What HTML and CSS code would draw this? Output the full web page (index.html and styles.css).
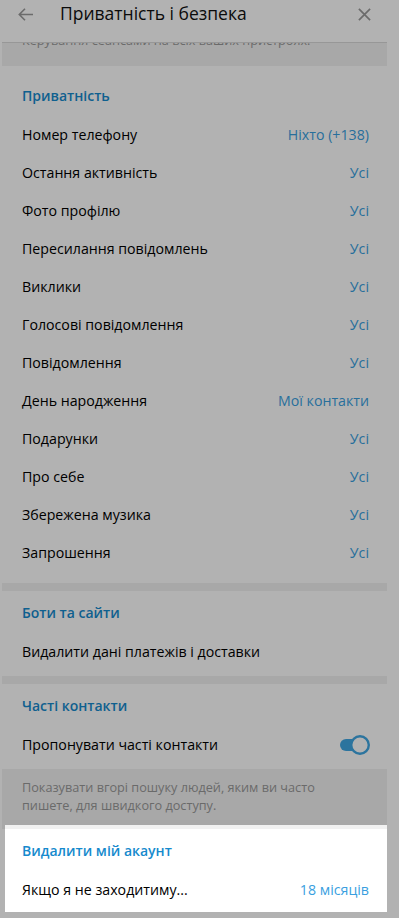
FILE: index.html
```html
<!DOCTYPE html>
<html lang="uk">
<head>
<meta charset="utf-8">
<title>Приватність і безпека</title>
<link rel="stylesheet" href="styles.css">
</head>
<body>
<div class="window">
  <header class="header">
    <span class="icon back">
      <svg width="15" height="13" viewBox="0 0 15 13"><path d="M15 6.5H1.3M7 0.8L1.3 6.5L7 12.2" fill="none" stroke="#9a9a9a" stroke-width="1.6"/></svg>
    </span>
    <h1 class="title">Приватність і безпека</h1>
    <span class="icon close">
      <svg width="13" height="13" viewBox="0 0 13 13"><path d="M0.9 0.9L12.1 12.1M12.1 0.9L0.9 12.1" fill="none" stroke="#9a9a9a" stroke-width="1.7"/></svg>
    </span>
  </header>
  <main class="content">
    <div class="divider divider-top">
      <p class="divider-text cut">Керування сеансами на всіх ваших пристроях.</p>
    </div>
    <section class="section section-first">
      <h2 class="subtitle">Приватність</h2>
      <div class="row"><span>Номер телефону</span><span class="value">Ніхто (+138)</span></div>
      <div class="row"><span>Остання активність</span><span class="value">Усі</span></div>
      <div class="row"><span>Фото профілю</span><span class="value">Усі</span></div>
      <div class="row"><span>Пересилання повідомлень</span><span class="value">Усі</span></div>
      <div class="row"><span>Виклики</span><span class="value">Усі</span></div>
      <div class="row"><span>Голосові повідомлення</span><span class="value">Усі</span></div>
      <div class="row"><span>Повідомлення</span><span class="value">Усі</span></div>
      <div class="row"><span>День народження</span><span class="value">Мої контакти</span></div>
      <div class="row"><span>Подарунки</span><span class="value">Усі</span></div>
      <div class="row"><span>Про себе</span><span class="value">Усі</span></div>
      <div class="row"><span>Збережена музика</span><span class="value">Усі</span></div>
      <div class="row"><span>Запрошення</span><span class="value">Усі</span></div>
    </section>
    <div class="divider"></div>
    <section class="section">
      <h2 class="subtitle">Боти та сайти</h2>
      <div class="row"><span>Видалити дані платежів і доставки</span></div>
    </section>
    <div class="divider"></div>
    <section class="section">
      <h2 class="subtitle">Часті контакти</h2>
      <div class="row"><span>Пропонувати часті контакти</span>
        <svg class="toggle" width="32" height="22" viewBox="0 0 32 22"><rect x="1" y="5" width="24" height="12" rx="6" fill="#40a7e3"/><circle cx="21" cy="11" r="8.8" fill="#fff" stroke="#40a7e3" stroke-width="2.4"/></svg>
      </div>
    </section>
    <div class="divider divider-label">
      <p class="divider-text">Показувати вгорі пошуку людей, яким ви часто пишете, для швидкого доступу.</p>
    </div>
    <section class="section spotlight">
      <h2 class="subtitle">Видалити мій акаунт</h2>
      <div class="row"><span>Якщо я не заходитиму...</span><span class="value">18 місяців</span></div>
    </section>
  </main>
</div>
</body>
</html>
```
FILE: styles.css
```css
html, body {
  margin: 0;
  padding: 0;
  background: #ffffff;
}

.window {
  width: 399px;
  min-height: 918px;
  font-family: "Open Sans", "Noto Sans", sans-serif;
  color: #000000;
  background: #ffffff;
}

.header {
  height: 42px;
  display: flex;
  align-items: flex-start;
  background: #ffffff;
}

.icon {
  height: 29px;
  display: flex;
  align-items: center;
}

.back {
  margin-left: 18px;
  width: 15px;
}

.title {
  margin: 0 0 0 27px;
  font-size: 17.5px;
  font-weight: 500;
  line-height: 26px;
  color: #111111;
}

.close {
  margin-left: auto;
  margin-right: 28px;
  width: 13px;
}

.content {
  margin-left: 2px;
  width: 385px;
}

.divider {
  height: 8px;
  background: #f1f1f1;
}

.divider-top {
  height: 23px;
  border-top: 1px solid #d8d8d8;
  overflow: hidden;
}

.divider-text {
  margin: 0;
  padding: 0 45px 0 20px;
  font-size: 12.7px;
  line-height: 18px;
  color: #999999;
}

.divider-text.cut {
  margin-top: -12px;
  white-space: nowrap;
}

.divider-label {
  height: auto;
  padding: 9px 0 15px;
}

.section {
  padding: 12px 0 5px;
}

.section-first {
  padding: 20px 0 11px;
}

.subtitle {
  margin: 0 0 10px;
  padding: 0 20px;
  font-size: 14px;
  font-weight: 600;
  line-height: 20px;
  color: #168acd;
}

.row {
  height: 38px;
  padding: 0 18px 0 20px;
  display: flex;
  align-items: center;
  justify-content: space-between;
  font-size: 14.2px;
  line-height: 38px;
}

.value {
  color: #3a9fdf;
}

.toggle {
  display: block;
  margin-right: -2px;
}

.spotlight {
  position: relative;
  padding-bottom: 3px;
}

.spotlight::before {
  content: "";
  position: absolute;
  top: -4px;
  left: 3px;
  right: 0;
  bottom: 0;
  z-index: 2;
  box-shadow: 0 0 0 3000px rgba(0, 0, 0, 0.3);
  pointer-events: none;
}
```
